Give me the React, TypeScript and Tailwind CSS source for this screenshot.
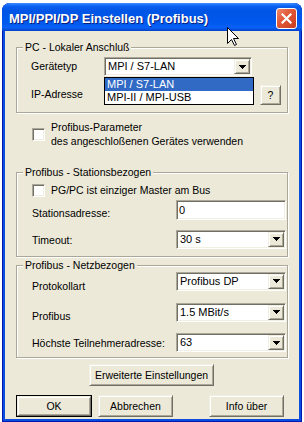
import React from 'react';

const sunken =
  "border border-t-[#aca899] border-l-[#aca899] border-r-white border-b-white shadow-[inset_1px_1px_0_#716f64,inset_-1px_-1px_0_#f1efe2]";
const raised =
  "border border-t-[#f1efe2] border-l-[#f1efe2] border-r-[#716f64] border-b-[#716f64] shadow-[inset_1px_1px_0_#fff,inset_-1px_-1px_0_#aca899]";

function Arrow() {
  return (
    <svg width="7" height="4" viewBox="0 0 7 4" shapeRendering="crispEdges">
      <path d="M0 0H7V1H6V2H5V3H4V4H3V3H2V2H1V1H0Z" fill="#000" />
    </svg>
  );
}

function Combo({ value, className }: { value: string; className: string }) {
  return (
    <div className={`${className} h-[19px] ${sunken} bg-white p-px flex`}>
      <span className="flex-1 pl-[2px] text-[11px] leading-[15px] whitespace-nowrap">{value}</span>
      <div className={`w-[16px] h-full ${raised} bg-[#ece9d8] flex items-center justify-center`}>
        <Arrow />
      </div>
    </div>
  );
}

function Check() {
  return <div className={`w-[13px] h-[13px] shrink-0 bg-white ${sunken}`} />;
}

function Group({ title, children }: { title: string; children: React.ReactNode }) {
  return (
    <fieldset className="w-[272px] border border-[#aca899] shadow-[1px_1px_0_#fff,inset_1px_1px_0_#fff]">
      <legend className="ml-[6px] px-[2px] leading-[13px] bg-[#ece9d8]">{title}</legend>
      {children}
    </fieldset>
  );
}

function Btn({ label, className }: { label: string; className: string }) {
  return (
    <div className={`${className} h-[22px] ${raised} bg-[#ece9d8] flex items-center justify-center leading-none`}>
      {label}
    </div>
  );
}

export default function App() {
  return (
    <div className="w-[304px] h-[422px] bg-white relative overflow-hidden font-['Liberation_Sans',Arial,sans-serif] text-[10.5px] text-black">
      <div className="ml-[2px] mt-[3px] w-[300px] h-[419px] flex flex-col rounded-t-[8px] overflow-hidden bg-[#0b4ddd] shadow-[inset_0_0_0_1px_#0019b0]">
        {/* title bar */}
        <div className="h-[28px] shrink-0 flex items-center pt-[3px] pl-[7px] pr-[5px] bg-[linear-gradient(to_bottom,#3a8cff_0%,#0a5ef0_12%,#0055e5_30%,#0058ee_70%,#0a60f5_88%,#0042c8_100%)]">
          <span className="flex-1 text-white font-bold text-[13px] [text-shadow:1px_1px_#0a1e80] whitespace-nowrap">
            MPI/PPI/DP Einstellen (Profibus)
          </span>
          <div className="w-[21px] h-[21px] rounded-[3px] border border-white bg-[linear-gradient(135deg,#f08a6c_0%,#e25a3a_40%,#c83c1c_100%)] flex items-center justify-center">
            <svg width="11" height="11" viewBox="0 0 11 11">
              <path d="M1.5 1.5L9.5 9.5M9.5 1.5L1.5 9.5" stroke="#fff" strokeWidth="2.2" strokeLinecap="square" />
            </svg>
          </div>
        </div>

        {/* client area */}
        <div className="flex-1 mx-[3px] mb-[3px] bg-[#ece9d8] pt-[10px] pl-[11px] flex flex-col items-start">
          <Group title="PC - Lokaler Anschluß">
            <div className="pt-[3px] pl-[14px] pb-[7px]">
              <div className="flex items-center h-[19px]">
                <span className="w-[73px]">Gerätetyp</span>
                <div className="relative">
                  <Combo value="MPI / S7-LAN" className="w-[148px]" />
                  <div className="absolute left-0 top-[20px] w-[150px] border border-black bg-white text-[11px] leading-[13px] z-10">
                    <div className="h-[13px] bg-[#316ac5] text-white pl-[2px]">MPI / S7-LAN</div>
                    <div className="h-[13px] pl-[2px]">MPI-II / MPI-USB</div>
                  </div>
                </div>
              </div>
              <div className="flex items-center mt-[9px] h-[20px]">
                <span className="w-[73px]">IP-Adresse</span>
                <Btn label="?" className="ml-[156px] w-[21px] !h-[20px]" />
              </div>
            </div>
          </Group>

          <div className="flex items-center mt-[7px] pl-[16px]">
            <Check />
            <div className="ml-[6px] leading-[14px]">
              Profibus-Parameter
              <br />
              des angeschloßenen Gerätes verwenden
            </div>
          </div>

          <div className="mt-[18px]">
            <Group title="Profibus - Stationsbezogen">
              <div className="pt-[5px] pl-[15px] pr-[1px] pb-[7px]">
                <div className="flex items-center h-[13px]">
                  <Check />
                  <span className="ml-[6px]">PG/PC ist einziger Master am Bus</span>
                </div>
                <div className="flex justify-between items-start mt-[3px]">
                  <span className="mt-[6px]">Stationsadresse:</span>
                  <div className={`w-[110px] h-[20px] ${sunken} bg-white pl-[2px] text-[11px] leading-[18px]`}>0</div>
                </div>
                <div className="flex justify-between items-start mt-[8px]">
                  <span className="mt-[3px]">Timeout:</span>
                  <Combo value="30 s" className="w-[110px]" />
                </div>
              </div>
            </Group>
          </div>

          <div className="mt-[2px]">
            <Group title="Profibus - Netzbezogen">
              <div className="pl-[15px] pr-[1px] pb-[5px]">
                <div className="flex justify-between items-start">
                  <span className="mt-[7px]">Protokollart</span>
                  <Combo value="Profibus DP" className="w-[110px]" />
                </div>
                <div className="flex justify-between items-start mt-[8px]">
                  <span className="mt-[6px]">Profibus</span>
                  <Combo value="1.5 MBit/s" className="w-[110px]" />
                </div>
                <div className="flex justify-between items-start mt-[9px]">
                  <span className="mt-[3px]">Höchste Teilnehmeradresse:</span>
                  <Combo value="63" className="w-[110px]" />
                </div>
              </div>
            </Group>
          </div>

          <Btn label="Erweiterte Einstellungen" className="mt-[6px] ml-[73px] w-[125px]" />

          <div className="flex mt-[9px]">
            <div className="w-[76px] h-[22px] border border-black">
              <Btn label="OK" className="w-full !h-full" />
            </div>
            <Btn label="Abbrechen" className="ml-[6px] w-[75px]" />
            <Btn label="Info über" className="ml-[36px] w-[75px]" />
          </div>
        </div>
      </div>

      {/* mouse pointer */}
      <svg className="absolute left-[227px] top-[27px]" width="13" height="20" viewBox="0 0 13 20">
        <path d="M0.5 0.5V16.5L4.5 12.5L7.5 18.5L9.5 17.5L6.5 11.5H11.5Z" fill="#fff" stroke="#000" strokeWidth="1" />
      </svg>
    </div>
  );
}
